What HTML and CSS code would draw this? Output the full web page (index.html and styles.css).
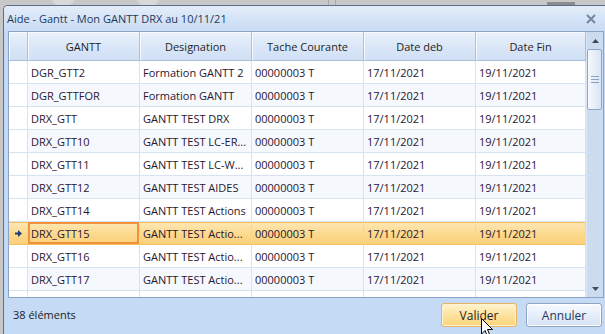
FILE: index.html
```html
<!DOCTYPE html>
<html lang="fr">
<head>
  <meta charset="UTF-8">
  <title>Aide - Gantt</title>
  <link rel="stylesheet" href="styles.css">
</head>
<body>
  <div class="backdrop">
    <span class="blob b1"></span>
    <span class="blob b2"></span>
    <span class="tick t1"></span>
    <span class="tick t2"></span>
    <span class="bar"></span>
  </div>

  <div class="dialog">
    <div class="titlebar">
      <span class="title">Aide - Gantt - Mon GANTT DRX au 10/11/21</span>
      <svg class="close" width="10" height="10" viewBox="0 0 10 10">
        <path d="M1 1 L9 9 M9 1 L1 9" stroke="#75879f" stroke-width="2"/>
      </svg>
    </div>

    <div class="grid">
      <div class="table">
        <div class="row head">
          <div class="cell ind"></div>
          <div class="cell">GANTT</div>
          <div class="cell">Designation</div>
          <div class="cell">Tache Courante</div>
          <div class="cell">Date deb</div>
          <div class="cell">Date Fin</div>
        </div>
        <div class="row">
          <div class="cell ind"></div>
          <div class="cell">DGR_GTT2</div>
          <div class="cell">Formation GANTT 2</div>
          <div class="cell">00000003 T</div>
          <div class="cell">17/11/2021</div>
          <div class="cell">19/11/2021</div>
        </div>
        <div class="row alt">
          <div class="cell ind"></div>
          <div class="cell">DGR_GTTFOR</div>
          <div class="cell">Formation GANTT</div>
          <div class="cell">00000003 T</div>
          <div class="cell">17/11/2021</div>
          <div class="cell">19/11/2021</div>
        </div>
        <div class="row">
          <div class="cell ind"></div>
          <div class="cell">DRX_GTT</div>
          <div class="cell">GANTT TEST DRX</div>
          <div class="cell">00000003 T</div>
          <div class="cell">17/11/2021</div>
          <div class="cell">19/11/2021</div>
        </div>
        <div class="row alt">
          <div class="cell ind"></div>
          <div class="cell">DRX_GTT10</div>
          <div class="cell">GANTT TEST LC-ER...</div>
          <div class="cell">00000003 T</div>
          <div class="cell">17/11/2021</div>
          <div class="cell">19/11/2021</div>
        </div>
        <div class="row">
          <div class="cell ind"></div>
          <div class="cell">DRX_GTT11</div>
          <div class="cell">GANTT TEST LC-W...</div>
          <div class="cell">00000003 T</div>
          <div class="cell">17/11/2021</div>
          <div class="cell">19/11/2021</div>
        </div>
        <div class="row alt">
          <div class="cell ind"></div>
          <div class="cell">DRX_GTT12</div>
          <div class="cell">GANTT TEST AIDES</div>
          <div class="cell">00000003 T</div>
          <div class="cell">17/11/2021</div>
          <div class="cell">19/11/2021</div>
        </div>
        <div class="row">
          <div class="cell ind"></div>
          <div class="cell">DRX_GTT14</div>
          <div class="cell">GANTT TEST Actions</div>
          <div class="cell">00000003 T</div>
          <div class="cell">17/11/2021</div>
          <div class="cell">19/11/2021</div>
        </div>
        <div class="row selected">
          <div class="cell ind">
            <svg width="7" height="7" viewBox="0 0 7 7">
              <path d="M0 2.5 H3 V0 L7 3.5 L3 7 V4.5 H0 Z" fill="#1f3b73"/>
            </svg>
          </div>
          <div class="cell focus">DRX_GTT15</div>
          <div class="cell">GANTT TEST Actio...</div>
          <div class="cell">00000003 T</div>
          <div class="cell">17/11/2021</div>
          <div class="cell">19/11/2021</div>
        </div>
        <div class="row">
          <div class="cell ind"></div>
          <div class="cell">DRX_GTT16</div>
          <div class="cell">GANTT TEST Actio...</div>
          <div class="cell">00000003 T</div>
          <div class="cell">17/11/2021</div>
          <div class="cell">19/11/2021</div>
        </div>
        <div class="row alt">
          <div class="cell ind"></div>
          <div class="cell">DRX_GTT17</div>
          <div class="cell">GANTT TEST Actio...</div>
          <div class="cell">00000003 T</div>
          <div class="cell">17/11/2021</div>
          <div class="cell">19/11/2021</div>
        </div>
        <div class="row">
          <div class="cell ind"></div>
          <div class="cell"></div>
          <div class="cell"></div>
          <div class="cell"></div>
          <div class="cell"></div>
          <div class="cell"></div>
        </div>
      </div>

      <div class="scrollbar">
        <div class="sb-btn">
          <svg width="7" height="4" viewBox="0 0 7 4"><path d="M0 4 L3.5 0 L7 4 Z" fill="#3d4b60"/></svg>
        </div>
        <div class="thumb"><span></span><span></span><span></span></div>
        <div class="track"></div>
        <div class="sb-btn">
          <svg width="7" height="4" viewBox="0 0 7 4"><path d="M0 0 L7 0 L3.5 4 Z" fill="#3d4b60"/></svg>
        </div>
      </div>
    </div>

    <div class="footer">
      <span class="count">38 éléments</span>
      <div class="buttons">
        <button class="btn primary">Valider</button>
        <button class="btn">Annuler</button>
      </div>
    </div>
  </div>

  <svg class="cursor" width="14" height="20" viewBox="0 0 14 20">
    <path d="M0.5 0.5 V16 L4 12.5 L6.5 18.5 L9 17.5 L6.5 11.5 H11.5 Z" fill="#fff" stroke="#000" stroke-width="1"/>
  </svg>
</body>
</html>
```

FILE: styles.css
```css
body {
  margin: 0;
  width: 605px;
  height: 334px;
  overflow: hidden;
  background-color: #c8c8c8;
  font-family: "Open Sans", "Noto Sans", sans-serif;
  font-size: 11px;
  color: #1e1e1e;
  position: relative;
}

.backdrop {
  height: 5px;
  position: relative;
  overflow: hidden;
}

.blob {
  position: absolute;
  top: -6px;
  width: 22px;
  height: 12px;
  border-radius: 50%;
  background: #d8d8d8;
}

.b1 { left: 52px; }
.b2 { left: 137px; }

.tick {
  position: absolute;
  top: 0;
  width: 1px;
  height: 5px;
  background: #a8a8a8;
}

.t1 { left: 328px; }
.t2 { left: 335px; }

.bar {
  position: absolute;
  left: 547px;
  top: 2px;
  width: 28px;
  height: 3px;
  background: #8d8d8d;
}

.dialog {
  margin-left: 3px;
  width: 602px;
  height: 329px;
  box-sizing: border-box;
  border-left: 1px solid #5f6e84;
  border-top: 1px solid #5f6e84;
  border-top-left-radius: 5px;
  background-color: #c5daf5;
  display: flex;
  flex-direction: column;
}

.titlebar {
  height: 25px;
  flex-shrink: 0;
  display: flex;
  align-items: center;
  justify-content: space-between;
  padding: 0 9px 0 3px;
  background: linear-gradient(#e4edf9, #d2e2f6 60%, #c9dcf4);
  border-top-left-radius: 4px;
}

.title {
  color: #1e395b;
  font-size: 11px;
}

.close {
  display: block;
}

.grid {
  margin-left: 4px;
  width: 596px;
  height: 267px;
  box-sizing: border-box;
  border: 1px solid #8ba3c4;
  display: flex;
  background: #ffffff;
  flex-shrink: 0;
}

.table {
  width: 577px;
  height: 265px;
  overflow: hidden;
}

.row {
  display: grid;
  grid-template-columns: 19px 112px 112px 112px 112px 110px;
  height: 23px;
  background: #ffffff;
}

.row.alt {
  background: #f5f9fe;
}

.cell {
  box-sizing: border-box;
  border-right: 1px solid #d6e3f2;
  border-bottom: 1px solid #d6e3f2;
  padding-left: 3px;
  display: flex;
  align-items: center;
  white-space: nowrap;
  overflow: hidden;
  color: #2a1630;
}

.cell.ind {
  padding: 0;
  background: #ffffff;
  justify-content: center;
}

.row.head {
  height: 29px;
}

.row.head .cell {
  justify-content: center;
  padding: 0;
  color: #1e1e1e;
  background: linear-gradient(#eaf2fc, #dbe7f7 50%, #d0e0f5);
  border-right: 1px solid #a9c0dc;
  border-bottom: 1px solid #a9c0dc;
  box-shadow: inset 1px 1px 0 #f7fbff;
}

.row.selected .cell {
  background: linear-gradient(#fde8b5, #fcd98e 55%, #fbd07a);
  border-bottom-color: #f4c05a;
  border-right-color: #f7d595;
  box-shadow: inset 0 1px 0 #f4c05a;
}

.row.selected .cell.focus {
  box-shadow: inset 0 0 0 2px #f2913c;
}

.scrollbar {
  width: 17px;
  display: flex;
  flex-direction: column;
  background: #cbdcf1;
  border-left: 1px solid #dce7f5;
  box-sizing: border-box;
}

.sb-btn {
  height: 17px;
  display: flex;
  align-items: center;
  justify-content: center;
}

.thumb {
  height: 61px;
  margin: 0 1px 0 0;
  box-sizing: border-box;
  border: 1px solid #8ea6c8;
  border-radius: 2px;
  background: linear-gradient(90deg, #f6f9fe, #e3ecf8 60%, #d9e5f5);
  display: flex;
  flex-direction: column;
  justify-content: center;
  align-items: center;
  gap: 2px;
}

.thumb span {
  width: 8px;
  height: 1px;
  background: #8aa0bf;
}

.track {
  flex: 1;
}

.footer {
  flex: 1;
  display: flex;
  align-items: flex-start;
  justify-content: space-between;
  padding: 5px 3px 0 9px;
}

.count {
  line-height: 24px;
  color: #1e1e1e;
}

.buttons {
  display: flex;
  gap: 9px;
}

.btn {
  width: 76px;
  height: 24px;
  font-family: inherit;
  font-size: 12px;
  color: #1e395b;
  border: 1px solid #8fa5c4;
  border-radius: 3px;
  background: linear-gradient(#f7faff, #e6eefa 50%, #d6e3f4);
  box-shadow: inset 0 0 0 1px #ffffff;
  padding: 0;
}

.btn.primary {
  color: #1e1e1e;
  border-color: #e6b563;
  background: linear-gradient(#fff3cf, #fde3a0 50%, #fbd37a);
  box-shadow: inset 0 0 0 1px #fff3d4;
}

.cursor {
  position: absolute;
  left: 481px;
  top: 318px;
}
```
